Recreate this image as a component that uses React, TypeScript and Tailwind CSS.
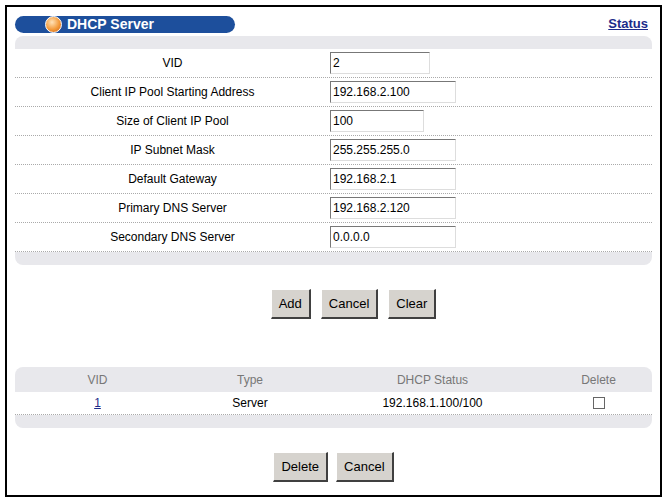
const rows = [
  { label: "VID", value: "2", w: "w-[100px]" },
  { label: "Client IP Pool Starting Address", value: "192.168.2.100", w: "w-[126px]" },
  { label: "Size of Client IP Pool", value: "100", w: "w-[94px]" },
  { label: "IP Subnet Mask", value: "255.255.255.0", w: "w-[126px]" },
  { label: "Default Gateway", value: "192.168.2.1", w: "w-[126px]" },
  { label: "Primary DNS Server", value: "192.168.2.120", w: "w-[126px]" },
  { label: "Secondary DNS Server", value: "0.0.0.0", w: "w-[126px]" },
];

function Btn({ children }: { children: string }) {
  return (
    <button className="h-[30px] px-[7px] bg-[#d6d3ce] text-[13px] text-black border-t border-l border-t-white border-l-white border-r-2 border-b-2 border-r-[#404040] border-b-[#404040]">
      {children}
    </button>
  );
}

export default function App() {
  return (
    <div
      className="w-[667px] h-[501px] bg-white p-[5px] text-[12px] text-black"
      style={{ fontFamily: '"Liberation Sans", Arial, sans-serif' }}
    >
      <div className="h-[492px] border-2 border-black px-[8px] pt-[7px]">
        {/* Title */}
        <div className="flex items-center justify-between h-[20px]">
          <div className="flex items-center w-[220px] h-[17px] rounded-full bg-[#1d4f9c] pl-[30px]">
            <span className="w-[17px] h-[17px] rounded-full bg-[radial-gradient(circle_at_40%_35%,#ffe2b8,#f39a3a_55%,#c8601a)] border border-white" />
            <span className="ml-[5px] text-white font-bold text-[14px]">DHCP Server</span>
          </div>
          <a className="text-[#1d2b8a] font-bold underline text-[13px] pr-[4px]">Status</a>
        </div>

        {/* Form panel */}
        <div className="mt-[2px] bg-[#e8e8ec] rounded-[8px] pt-[13px] pb-[13px]">
          <div className="bg-white">
            {rows.map((r) => (
              <div key={r.label} className="flex items-center h-[29px] border-b border-dotted border-[#aaa]">
                <div className="w-[315px] text-center">{r.label}</div>
                <div className={`${r.w} h-[22px] border border-t-[#777] border-l-[#777] border-r-[#ddd] border-b-[#ddd] px-[2px] leading-[20px]`}>
                  {r.value}
                </div>
              </div>
            ))}
          </div>
        </div>

        <div className="flex justify-center gap-[10px] mt-[24px] pl-[40px]">
          <Btn>Add</Btn>
          <Btn>Cancel</Btn>
          <Btn>Clear</Btn>
        </div>

        {/* Table panel */}
        <div className="mt-[48px] bg-[#e8e8ec] rounded-[8px] pb-[13px]">
          <div className="grid grid-cols-[165px_140px_225px_1fr] h-[25px] items-center text-center text-[#777]">
            <div>VID</div>
            <div>Type</div>
            <div>DHCP Status</div>
            <div>Delete</div>
          </div>
          <div className="grid grid-cols-[165px_140px_225px_1fr] h-[23px] items-center text-center bg-white border-b border-dotted border-[#aaa] text-black">
            <div><a className="text-[#1d2b8a] underline">1</a></div>
            <div>Server</div>
            <div>192.168.1.100/100</div>
            <div className="flex justify-center"><span className="w-[12px] h-[12px] border border-[#666] bg-white" /></div>
          </div>
        </div>

        <div className="flex justify-center gap-[8px] mt-[24px]">
          <Btn>Delete</Btn>
          <Btn>Cancel</Btn>
        </div>
      </div>
    </div>
  );
}
